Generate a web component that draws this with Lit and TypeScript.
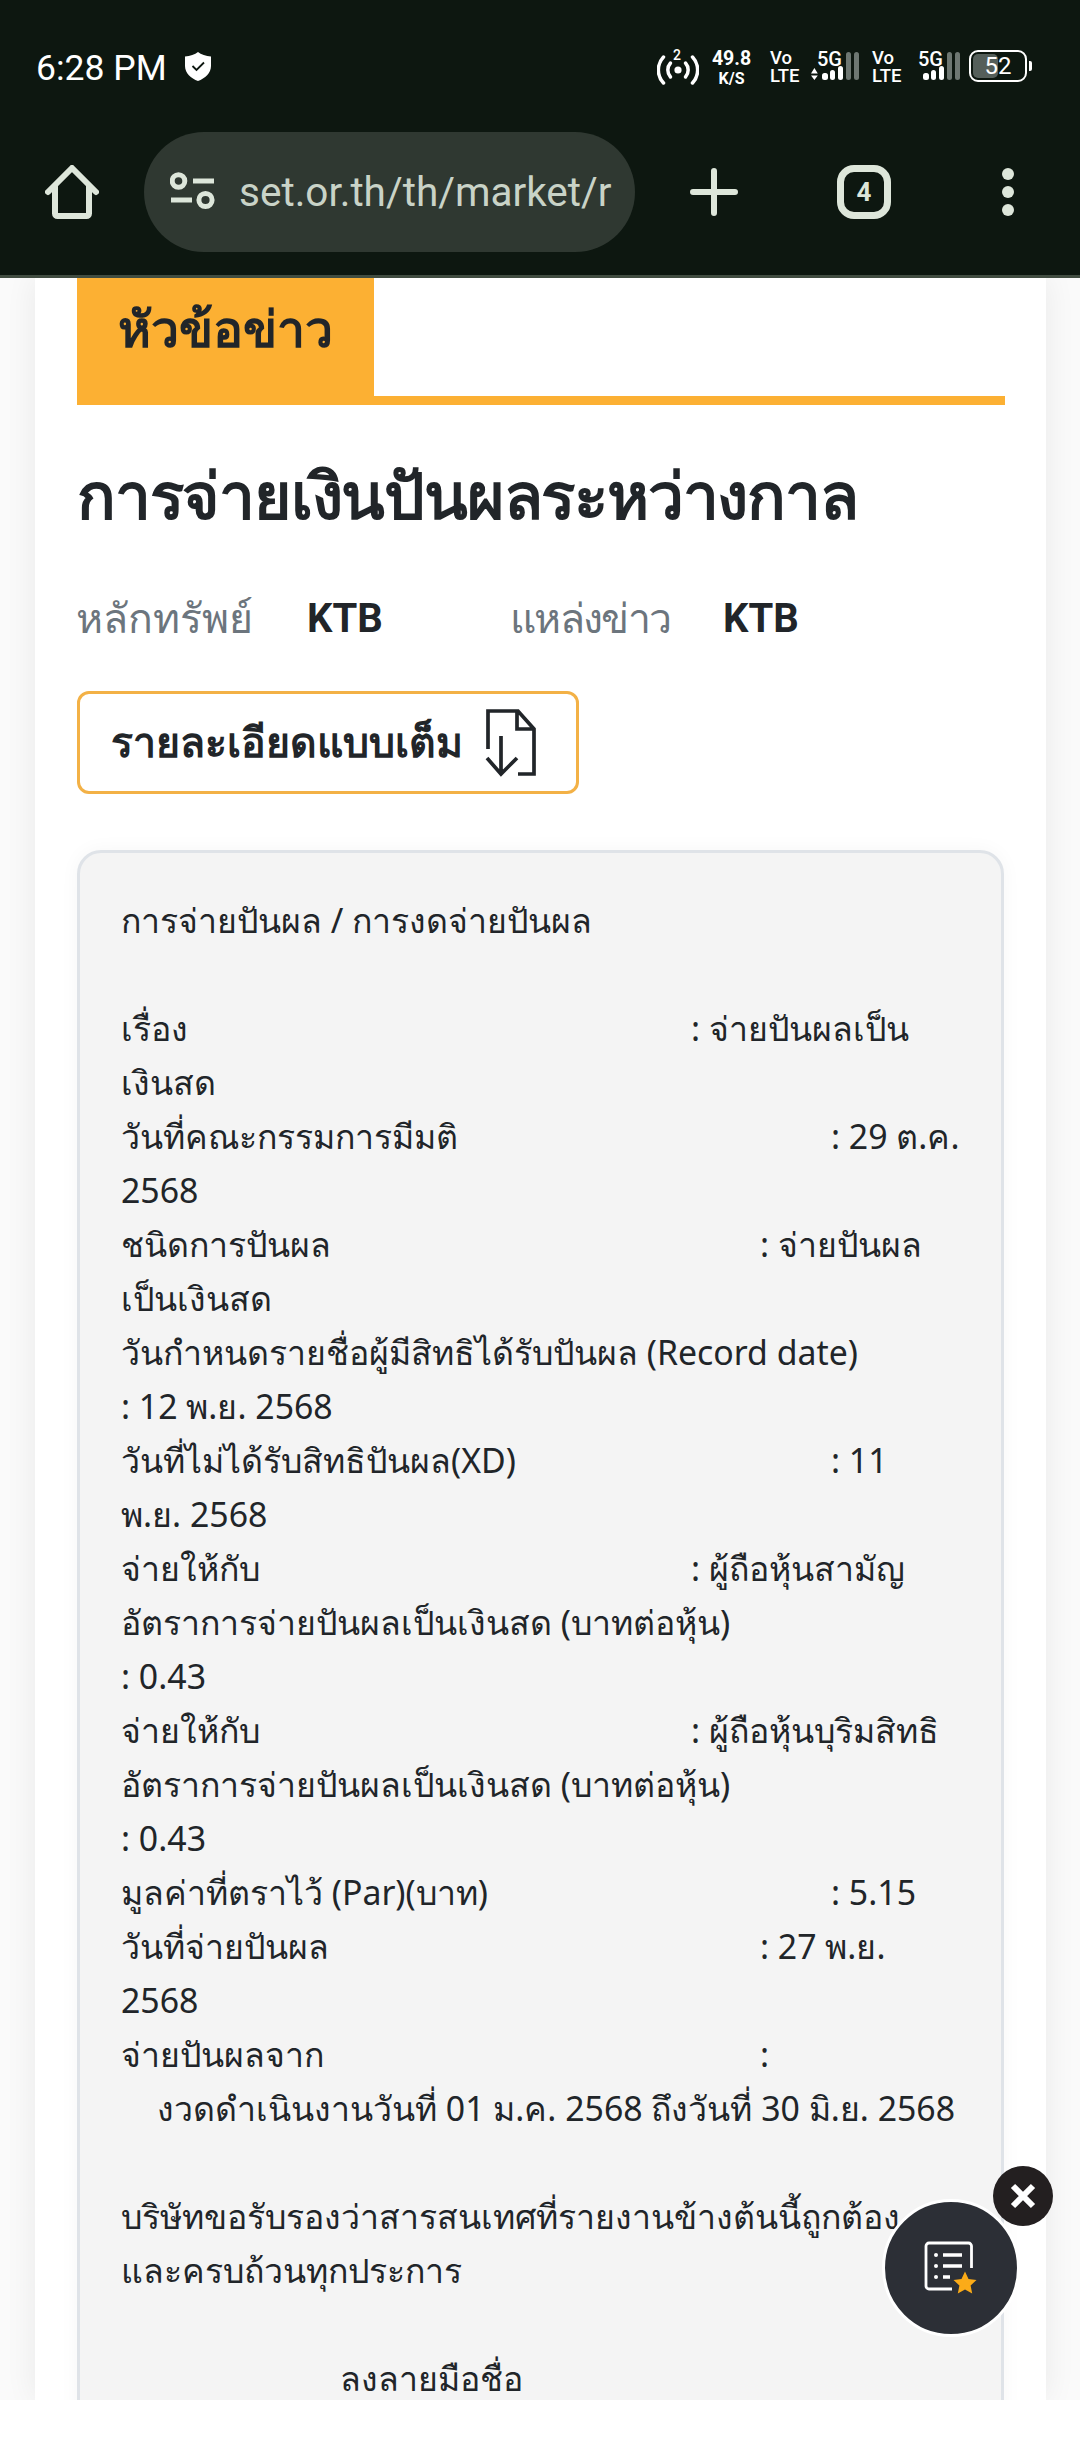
import { LitElement, html, css, svg } from "lit";
import { customElement } from "lit/decorators.js";

type Line = { t?: string; v?: string; w?: string; cls?: string };
const AT = "อัตราการจ่ายปันผลเป็นเงินสด (บาทต่อหุ้น)";
const lines: Line[] = [
  { t: "การจ่ายปันผล / การงดจ่ายปันผล" },
  {},
  { t: "เรื่อง", v: ": จ่ายปันผลเป็น", w: "w1" },
  { t: "เงินสด" },
  { t: "วันที่คณะกรรมการมีมติ", v: ": 29 ต.ค.", w: "w3" },
  { t: "2568" },
  { t: "ชนิดการปันผล", v: ": จ่ายปันผล", w: "w2" },
  { t: "เป็นเงินสด" },
  { t: "วันกำหนดรายชื่อผู้มีสิทธิได้รับปันผล (Record date)" },
  { t: ": 12 พ.ย. 2568" },
  { t: "วันที่ไม่ได้รับสิทธิปันผล(XD)", v: ": 11", w: "w3" },
  { t: "พ.ย. 2568" },
  { t: "จ่ายให้กับ", v: ": ผู้ถือหุ้นสามัญ", w: "w1" },
  { t: AT },
  { t: ": 0.43" },
  { t: "จ่ายให้กับ", v: ": ผู้ถือหุ้นบุริมสิทธิ", w: "w1" },
  { t: AT },
  { t: ": 0.43" },
  { t: "มูลค่าที่ตราไว้ (Par)(บาท)", v: ": 5.15", w: "w3" },
  { t: "วันที่จ่ายปันผล", v: ": 27 พ.ย.", w: "w2" },
  { t: "2568" },
  { t: "จ่ายปันผลจาก", v: ":", w: "w2" },
  { t: "งวดดำเนินงานวันที่ 01 ม.ค. 2568 ถึงวันที่ 30 มิ.ย. 2568", cls: "in1" },
  {},
  { t: "บริษัทขอรับรองว่าสารสนเทศที่รายงานข้างต้นนี้ถูกต้อง" },
  { t: "และครบถ้วนทุกประการ" },
  {},
  { t: "ลงลายมือชื่อ", cls: "in2" },
];

const signal = (arrows: boolean) => html`<div class="sig ${arrows ? "" : "tight"}">
  <svg width="49" height="30" viewBox="0 0 49 30">
    ${arrows ? svg`<path d="M0 23.5 3.4 18 6.8 23.5ZM0 25.5H6.8L3.4 30Z" fill="#fff"/>` : ""}
    <rect x="11" y="23" width="6" height="7" rx="2.5" fill="#fff"/>
    <rect x="19" y="20" width="5" height="10" rx="2.5" fill="#fff"/>
    <rect x="27" y="16" width="5" height="14" rx="2.5" fill="#fff"/>
    <rect x="35" y="2" width="5" height="28" rx="2.5" fill="#6e7772"/>
    <rect x="43" y="2" width="5" height="28" rx="2.5" fill="#6e7772"/>
  </svg>
  <span class="fiveg">5G</span>
</div>`;

const vo = html`<div class="stack vo"><span>Vo</span><span>LTE</span></div>`;

@customElement("app-root")
export class AppRoot extends LitElement {
  static styles = css`
    :host { display: block; width: 1080px; height: 2460px; overflow: hidden; background: #fff; position: relative;
      font-family: Roboto, "Noto Sans", sans-serif; }
    * { box-sizing: border-box; }
    .top { height: 278px; background: #0d1710; border-bottom: 3px solid #414d41; display: flex; flex-direction: column; }
    .status { height: 132px; display: flex; align-items: flex-start; padding: 50px 0 0 36px; color: #fff; }
    .time { font-size: 35.5px; line-height: 36px; width: 149px; }
    .shield { margin-top: 2px; }
    .right { margin-left: auto; display: flex; padding-right: 48px; }
    .hot { width: 42px; height: 32px; margin-right: 13px; position: relative; margin-top: 2px; }
    .hot span { position: absolute; left: 16px; top: -4px; font-size: 14px; line-height: 15px; font-weight: 500; }
    .stack { display: flex; flex-direction: column; font-weight: 500; white-space: nowrap; }
    .speed { width: 39px; margin-right: 19px; align-items: center; font-weight: 700; }
    .speed span:first-child { font-size: 19.5px; line-height: 17px; }
    .speed span:last-child { font-size: 16px; line-height: 15px; margin-top: 4px; }
    .vo { width: 29px; margin-right: 12px; }
    .vo span:first-child { font-size: 18.5px; line-height: 17px; }
    .vo span:last-child { font-size: 18.5px; line-height: 15px; margin-top: 2px; }
    .sig { width: 49px; height: 31px; position: relative; margin-right: 12px; }
    .sig svg { display: block; }
    .fiveg { position: absolute; left: 6px; top: 0; font-size: 20px; line-height: 18px; font-weight: 500; }
    .sig.tight { margin-right: 8px; margin-left: -1px; }
    .batt { width: 58px; height: 32px; border: 2.5px solid #fff; border-radius: 9px; position: relative; display: flex; align-items: center; justify-content: center; font-size: 24px; }
    .batt i { position: absolute; left: 2px; top: 2px; bottom: 2px; width: 25px; background: #555f5a; border-radius: 5px; }
    .batt b { position: relative; font-weight: 400; line-height: 24px; }
    .nub { width: 3px; height: 10px; background: #fff; margin: 11px 0 0 2px; border-radius: 0 2px 2px 0; }

    .bar { flex: 1; display: flex; align-items: flex-start; color: #dde6da; }
    .home { margin: 33px 0 0 45px; width: 54px; height: 54px; }
    .pill { margin: 0 0 0 45px; width: 491px; height: 120px; border-radius: 60px; background: #2f3831; display: flex; align-items: center; padding-left: 26px; overflow: hidden; }
    .url { font-size: 40.5px; line-height: 48px; color: #c9d3c7; margin-left: 23px; width: 375px; overflow: hidden; white-space: nowrap; }
    .plus { margin: 36px 0 0 55px; }
    .tabs { margin: 33px 0 0 99px; width: 54px; height: 54px; border: 7px solid #dde6da; border-radius: 17px; display: flex; align-items: center; justify-content: center; font-size: 26px; font-weight: 700; line-height: 26px; }
    .dots { margin: 36px 0 0 111px; display: flex; flex-direction: column; gap: 6px; }
    .dots i { display: block; width: 12px; height: 12px; border-radius: 50%; background: #dde6da; }

    .page { height: 2122px; overflow: hidden; background: #fafafa; padding: 0 34px 0 35px; }
    .card { background: #fff; box-shadow: 0 0 30px rgba(0,0,0,.07); padding: 0 41px 0 42px; height: 2122px; }
    .head { height: 127px; border-bottom: 9px solid #fcb033; display: flex; }
    .tab { width: 297px; height: 118px; background: #fcb033; color: #212529; font-size: 50px; line-height: 100px; font-weight: 700; padding-left: 41px; white-space: nowrap; font-family: "Noto Sans", sans-serif; }
    h1 { margin: 45px 0 0; font-size: 64px; line-height: 90px; font-weight: 700; letter-spacing: -1.2px; color: #212529; white-space: nowrap; font-family: "Noto Sans", sans-serif; }
    .meta { margin: 48px 0 0 -1px; display: flex; align-items: center; height: 60px; font-size: 41px; white-space: nowrap; font-family: "Noto Sans", sans-serif; }
    .meta .k { color: #6c757d; }
    .meta .k2 { letter-spacing: -1.7px; }
    .meta .v { color: #212529; font-weight: 700; font-size: 40px; font-family: Roboto, sans-serif; }
    .k1 { width: 231px; } .v1 { width: 203px; } .k2 { width: 213px; }
    .btn { margin-top: 43px; width: 502px; height: 103px; border: 3px solid #f3b146; border-radius: 12px; display: flex; align-items: center; padding-left: 31px; font-size: 41px; font-weight: 700; color: #212529; white-space: nowrap; font-family: "Noto Sans", sans-serif; }
    .btn span { width: 374px; }
    .panel { margin-top: 56px; width: 927px; height: 1700px; background: #f4f4f4; border: 3px solid #dfe3e8; border-radius: 24px; box-shadow: 0 0 20px rgba(0,0,0,.04); padding: 40px 0 0 41px; color: #212529; font-size: 33.85px; line-height: 54px; font-family: "Noto Sans", sans-serif; }
    .ln { height: 54px; white-space: nowrap; display: flex; }
    .w1 { width: 570px; } .w2 { width: 639px; } .w3 { width: 710px; }
    .in1 { padding-left: 36px; } .in2 { padding-left: 219px; }

    .fab { position: absolute; left: 882px; top: 2199px; width: 138px; height: 138px; border-radius: 50%; background: #2c2f36; border: 3px solid #fff; display: flex; align-items: center; justify-content: center; }
    .close { position: absolute; left: 993px; top: 2166px; width: 60px; height: 60px; border-radius: 50%; background: #231f20; display: flex; align-items: center; justify-content: center; }
  `;

  render() {
    return html`
      <div class="top">
        <div class="status">
          <div class="time">6:28 PM</div>
          <svg class="shield" width="26" height="29" viewBox="0 0 26 29">
            <path d="M13 0C16 2.5 21 4 26 4.5V14C26 21 20 26.5 13 29 6 26.5 0 21 0 14V4.5C5 4 10 2.5 13 0Z" fill="#fff"/>
            <path d="M7.5 14 11.5 18 19 10.5" fill="none" stroke="#0d1710" stroke-width="1.8"/>
          </svg>
          <div class="right">
            <div class="hot">
              <svg width="42" height="34" viewBox="0 0 42 34" fill="none" stroke="#fff" stroke-width="3.5" stroke-linecap="round">
                <circle cx="21" cy="18" r="3.6" fill="#fff" stroke="none"/>
                <path d="M13.5 11a10.5 10.5 0 0 0 0 14M28.5 11a10.5 10.5 0 0 1 0 14"/>
                <path d="M6.5 5a19 19 0 0 0 0 26M35.5 5a19 19 0 0 1 0 26"/>
              </svg>
              <span>2</span>
            </div>
            <div class="stack speed"><span>49.8</span><span>K/S</span></div>
            ${vo}
            ${signal(true)}
            ${vo}
            ${signal(false)}
            <div class="batt"><i></i><b>52</b></div>
            <div class="nub"></div>
          </div>
        </div>
        <div class="bar">
          <svg class="home" viewBox="0 0 54 54" fill="none" stroke="#dde6da" stroke-width="6" stroke-linecap="round" stroke-linejoin="round">
            <path d="M3 27 27 3 51 27M10 21V48.500a2.500 2.500 0 0 0 2.500 2.500H41.500a2.500 2.500 0 0 0 2.500-2.500V21"/>
          </svg>
          <div class="pill">
            <svg width="46" height="40" viewBox="0 0 46 40" fill="none" stroke="#dde6da" stroke-width="5">
              <circle cx="8.500" cy="9" r="6.300"/>
              <path d="M23 9H44M1 28H22"/>
              <circle cx="35.500" cy="28" r="6.600"/>
            </svg>
            <div class="url">set.or.th/th/market/r</div>
          </div>
          <svg class="plus" width="48" height="48" viewBox="0 0 48 48" stroke="#dde6da" stroke-width="6" stroke-linecap="round">
            <path d="M24 3V45M3 24H45"/>
          </svg>
          <div class="tabs">4</div>
          <div class="dots"><i></i><i></i><i></i></div>
        </div>
      </div>
      <div class="page">
        <div class="card">
          <div class="head"><div class="tab">หัวข้อข่าว</div></div>
          <h1>การจ่ายเงินปันผลระหว่างกาล</h1>
          <div class="meta">
            <span class="k k1">หลักทรัพย์</span><span class="v v1">KTB</span>
            <span class="k k2">แหล่งข่าว</span><span class="v">KTB</span>
          </div>
          <div class="btn">
            <span>รายละเอียดแบบเต็ม</span>
            <svg width="52" height="70" viewBox="0 0 52 70" fill="none" stroke="#212529" stroke-width="3.700">
              <path d="M3 41V3H33L49 21V66H33M32 3V21H49M16 28V66M2 50 16 66 32 50"/>
            </svg>
          </div>
          <div class="panel">
            ${lines.map((l) =>
              l.v
                ? html`<div class="ln"><span class=${l.w ?? ""}>${l.t}</span><span>${l.v}</span></div>`
                : html`<div class="ln ${l.cls ?? ""}">${l.t ?? ""}</div>`
            )}
          </div>
        </div>
      </div>
      <div class="fab">
        <svg width="132" height="132" viewBox="0 0 132 132" fill="none" stroke="#fff">
          <path d="M86.500 66V44a3 3 0 0 0-3-3H44a3 3 0 0 0-3 3V84a3 3 0 0 0 3 3H67" stroke-width="2.800"/>
          <path d="M58 53H77M58 64H77M58 75H65" stroke-width="3.400"/>
          <circle cx="51" cy="53" r="2" fill="#fff" stroke="none"/>
          <circle cx="51" cy="64" r="2" fill="#fff" stroke="none"/>
          <circle cx="51" cy="75" r="2" fill="#fff" stroke="none"/>
          <path d="M80 69.500 83.500 77 91.500 78 85.600 83.500 87.200 91.500 80 87.500 72.800 91.500 74.400 83.500 68.500 78 76.500 77Z" fill="#fbab18" stroke="none"/>
        </svg>
      </div>
      <div class="close">
        <svg width="26" height="26" viewBox="0 0 26 26" stroke="#fff" stroke-width="6">
          <path d="M3 3 23 23M23 3 3 23"/>
        </svg>
      </div>
    `;
  }
}
